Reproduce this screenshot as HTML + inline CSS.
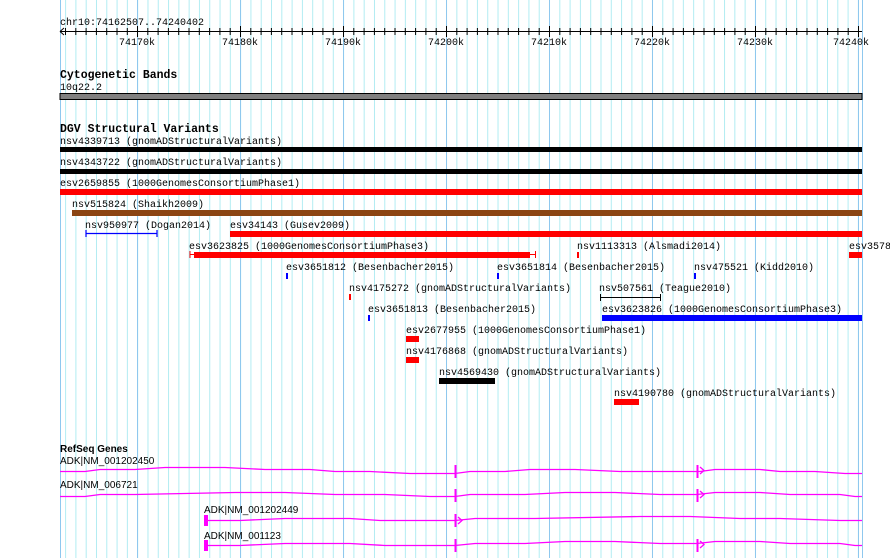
<!DOCTYPE html>
<html><head><meta charset="utf-8"><style>
html,body{margin:0;padding:0;background:#fff;width:890px;height:558px;overflow:hidden}
svg{display:block}
.m{font-family:"Liberation Mono","DejaVu Sans Mono",monospace;font-size:10px;fill:#000}
.b{font-family:"Liberation Mono",monospace;font-size:11.5px;font-weight:bold;fill:#000}
.s{font-family:"Liberation Sans",sans-serif;font-size:10px;fill:#000}
</style></head><body>
<svg width="890" height="558" xmlns="http://www.w3.org/2000/svg">
<defs>
<pattern id="g" patternUnits="userSpaceOnUse" x="65.1" y="0" width="10.296" height="10">
<rect x="0" y="0" width="1" height="10" fill="#b2ecf2"/>
</pattern>
</defs>
<rect x="60" y="0" width="803" height="558" fill="url(#g)"/>
<g fill="#8fc8ee">
<rect x="60" y="0" width="1" height="558"/>
<rect x="137" y="0" width="1" height="558"/>
<rect x="240" y="0" width="1" height="558"/>
<rect x="343" y="0" width="1" height="558"/>
<rect x="446" y="0" width="1" height="558"/>
<rect x="549" y="0" width="1" height="558"/>
<rect x="652" y="0" width="1" height="558"/>
<rect x="755" y="0" width="1" height="558"/>
<rect x="858" y="0" width="1" height="558"/>
<rect x="862" y="0" width="1" height="558"/>
</g>
<!-- ruler -->
<text class="m" x="60" y="25">chr10:74162507..74240402</text>
<line x1="60" y1="31.5" x2="862" y2="31.5" stroke="#000"/>
<path d="M60 31.5 L64 28 M60 31.5 L64 35" stroke="#000" fill="none"/>
<g stroke="#000">
<path d="M65.5 28V35M75.8 28V35M86.1 28V35M96.4 28V35M106.7 28V35M117 28V35M127.3 28V35M137.5 26V37M147.8 28V35M158.1 28V35M168.4 28V35M178.7 28V35M189 28V35M199.3 28V35M209.6 28V35M219.9 28V35M230.2 28V35M240.5 26V37M250.8 28V35M261.1 28V35M271.4 28V35M281.7 28V35M292 28V35M302.3 28V35M312.6 28V35M322.9 28V35M333.2 28V35M343.5 26V37M353.8 28V35M364.1 28V35M374.4 28V35M384.7 28V35M395 28V35M405.3 28V35M415.6 28V35M425.9 28V35M436.2 28V35M446.5 26V37M456.8 28V35M467.1 28V35M477.4 28V35M487.7 28V35M498 28V35M508.3 28V35M518.6 28V35M528.9 28V35M539.2 28V35M549.5 26V37M559.8 28V35M570.1 28V35M580.4 28V35M590.7 28V35M601 28V35M611.3 28V35M621.6 28V35M631.9 28V35M642.2 28V35M652.5 26V37M662.8 28V35M673.1 28V35M683.4 28V35M693.7 28V35M704 28V35M714.3 28V35M724.6 28V35M734.9 28V35M745.2 28V35M755.5 26V37M765.8 28V35M776.1 28V35M786.4 28V35M796.7 28V35M807 28V35M817.3 28V35M827.6 28V35M837.9 28V35M848.2 28V35M858.5 26V37"/>
</g>
<g class="m" text-anchor="middle" font-size="11">
<text x="137" y="45">74170k</text><text x="240" y="45">74180k</text><text x="343" y="45">74190k</text><text x="446" y="45">74200k</text><text x="549" y="45">74210k</text><text x="652" y="45">74220k</text><text x="755" y="45">74230k</text><text x="851" y="45">74240k</text>
</g>
<!-- cyto -->
<text class="b" x="60" y="78">Cytogenetic Bands</text>
<text class="m" x="60" y="90">10q22.2</text>
<rect x="60" y="93.5" width="802" height="6" fill="#808080" stroke="#000"/>
<!-- DGV -->
<text class="b" x="60" y="132">DGV Structural Variants</text>
<text class="m" x="60" y="144">nsv4339713 (gnomADStructuralVariants)</text>
<rect x="60" y="147" width="802" height="5" fill="#000"/>
<text class="m" x="60" y="165">nsv4343722 (gnomADStructuralVariants)</text>
<rect x="60" y="169" width="802" height="5" fill="#000"/>
<text class="m" x="60" y="186">esv2659855 (1000GenomesConsortiumPhase1)</text>
<rect x="60" y="189" width="802" height="6" fill="#f00"/>
<text class="m" x="72" y="207">nsv515824 (Shaikh2009)</text>
<rect x="72" y="210" width="790" height="6" fill="#8b4513"/>
<text class="m" x="85" y="228">nsv950977 (Dogan2014)</text>
<path d="M86 233.5 H157 M86 230 V237 M157 230 V237" stroke="#00f" stroke-width="1.2"/>
<text class="m" x="230" y="228">esv34143 (Gusev2009)</text>
<rect x="230" y="231" width="632" height="6" fill="#f00"/>
<text class="m" x="189" y="249">esv3623825 (1000GenomesConsortiumPhase3)</text>
<path d="M190 254.5 H536 M190 251 V258 M535.5 251 V258" stroke="#f00"/>
<rect x="194" y="252" width="336" height="6" fill="#f00"/>
<text class="m" x="577" y="249">nsv1113313 (Alsmadi2014)</text>
<rect x="577" y="252" width="2" height="6" fill="#f00"/>
<text class="m" x="849" y="249">esv3578</text>
<rect x="849" y="252" width="13" height="6" fill="#f00"/>
<text class="m" x="286" y="270">esv3651812 (Besenbacher2015)</text>
<rect x="286" y="273" width="2" height="6" fill="#00f"/>
<text class="m" x="497" y="270">esv3651814 (Besenbacher2015)</text>
<rect x="497" y="273" width="2" height="6" fill="#00f"/>
<text class="m" x="694" y="270">nsv475521 (Kidd2010)</text>
<rect x="694" y="273" width="2" height="6" fill="#00f"/>
<text class="m" x="349" y="291">nsv4175272 (gnomADStructuralVariants)</text>
<rect x="349" y="294" width="2" height="6" fill="#f00"/>
<text class="m" x="599" y="291">nsv507561 (Teague2010)</text>
<path d="M600 297.5 H661 M600.5 294 V301 M660.5 294 V301" stroke="#000"/>
<text class="m" x="368" y="312">esv3651813 (Besenbacher2015)</text>
<rect x="368" y="315" width="2" height="6" fill="#00f"/>
<text class="m" x="602" y="312">esv3623826 (1000GenomesConsortiumPhase3)</text>
<rect x="602" y="315" width="260" height="6" fill="#00f"/>
<text class="m" x="406" y="333">esv2677955 (1000GenomesConsortiumPhase1)</text>
<rect x="406" y="336" width="13" height="6" fill="#f00"/>
<text class="m" x="406" y="354">nsv4176868 (gnomADStructuralVariants)</text>
<rect x="406" y="357" width="13" height="6" fill="#f00"/>
<text class="m" x="439" y="375">nsv4569430 (gnomADStructuralVariants)</text>
<rect x="439" y="378" width="56" height="6" fill="#000"/>
<text class="m" x="614" y="396">nsv4190780 (gnomADStructuralVariants)</text>
<rect x="614" y="399" width="25" height="6" fill="#f00"/>
<!-- RefSeq -->
<text class="s" x="60" y="452" font-weight="bold" font-size="11">RefSeq Genes</text>
<text class="s" x="60" y="464">ADK|NM_001202450</text>
<g stroke="#f0f" fill="none" stroke-width="1.3">
<polyline points="60,471.5 85,471.5 100,469.5 135,469.5 165,467.5 225,467.5 265,469.5 310,469.5 335,471.5 370,471.5 410,473.5 455,473.5 470,471.5 505,471.5 530,469.5 575,469.5 620,471.5 700,471.5 715,469.5 760,469.5 780,471.5 815,471.5 845,473.5 862,473.5"/>
<path d="M700 467 L704 470.5 L700 474"/>
<path d="M455.5 465 V478 M697.5 465 V478" stroke-width="2"/>
</g>
<text class="s" x="60" y="488">ADK|NM_006721</text>
<g stroke="#f0f" fill="none" stroke-width="1.3">
<polyline points="60,496.5 85,496.5 100,494.5 135,494.5 235,492.5 285,492.5 335,494.5 385,494.5 430,496.5 455,496.5 470,494.5 525,494.5 565,492.5 615,492.5 660,494.5 697,494.5 715,492.5 760,492.5 790,494.5 840,494.5 855,496.5 862,496.5"/>
<path d="M700 491 L704 494.5 L700 498"/>
<path d="M455.5 489 V502 M697.5 489 V502" stroke-width="2"/>
</g>
<text class="s" x="204" y="513">ADK|NM_001202449</text>
<g stroke="#f0f" fill="none" stroke-width="1.3">
<polyline points="208,520.5 240,520.5 285,518.5 350,518.5 380,520.5 455,520.5 475,518.5 535,518.5 640,516.5 690,516.5 740,518.5 780,518.5 840,520.5 862,520.5"/>
<path d="M458 517 L462 520.5 L458 524"/>
<path d="M455.5 514 V527" stroke-width="2"/>
</g>
<rect x="204" y="515" width="4" height="11" fill="#f0f"/>
<text class="s" x="204" y="539">ADK|NM_001123</text>
<g stroke="#f0f" fill="none" stroke-width="1.3">
<polyline points="208,545.5 240,545.5 285,543.5 350,543.5 385,545.5 455,545.5 475,543.5 525,543.5 565,541.5 615,541.5 660,543.5 697,543.5 715,541.5 760,541.5 790,543.5 840,543.5 855,545.5 862,545.5"/>
<path d="M700 541 L704 544.5 L700 548"/>
<path d="M455.5 539 V552 M697.5 539 V552" stroke-width="2"/>
</g>
<rect x="204" y="540" width="4" height="11" fill="#f0f"/>
</svg>
</body></html>
